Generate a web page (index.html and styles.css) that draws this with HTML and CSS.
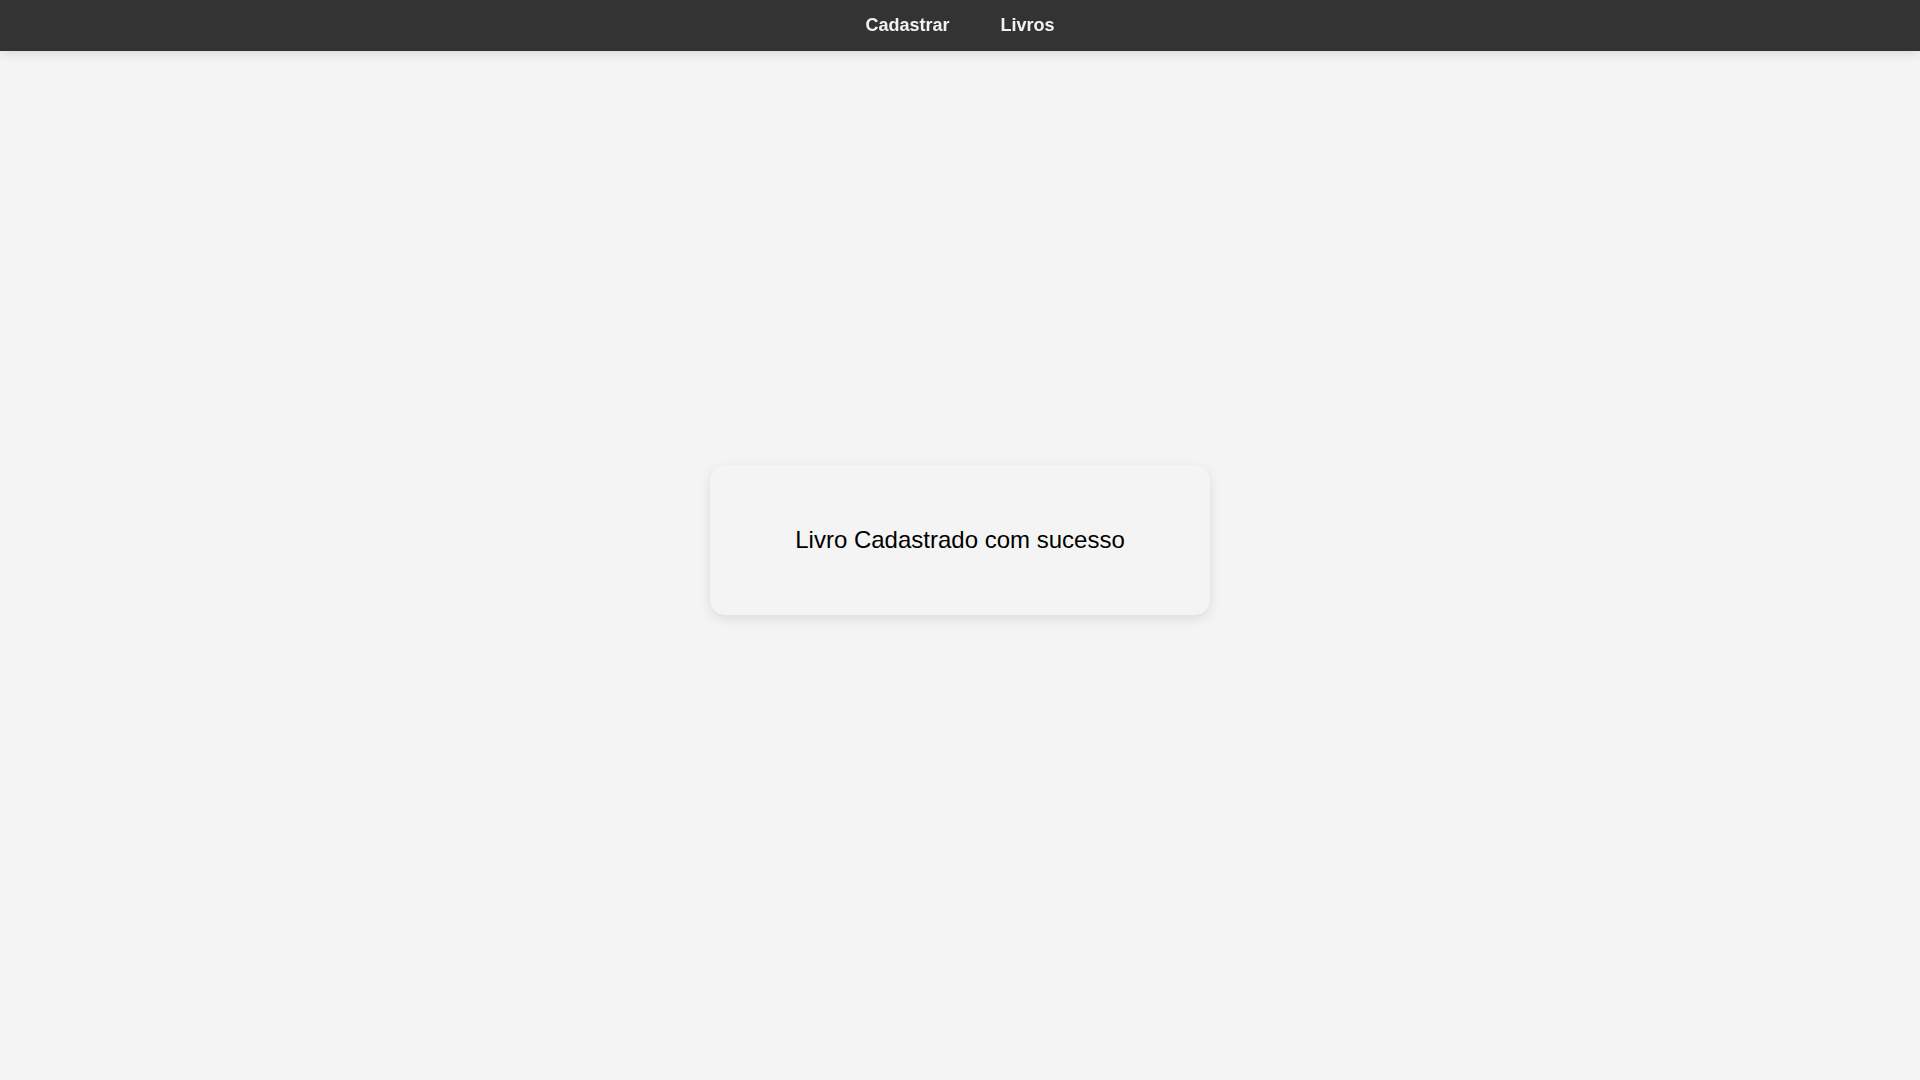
FILE: index.html
```html
<!DOCTYPE html>
<html lang="pt-BR">
<head>
<meta charset="utf-8">
<title>Livro Cadastrado</title>
<link rel="stylesheet" href="styles.css">
</head>
<body>
<nav class="navbar">
  <a class="nav-link" href="#">Cadastrar</a>
  <a class="nav-link" href="#">Livros</a>
</nav>
<main class="content">
  <div class="card">
    <p class="message">Livro Cadastrado com sucesso</p>
  </div>
</main>
</body>
</html>
```

FILE: styles.css
```css
* { box-sizing: border-box; }
html, body {
  margin: 0;
  padding: 0;
}
body {
  background: #f4f4f4;
  font-family: "Liberation Sans", Arial, sans-serif;
  color: #000;
  min-height: 100vh;
}
.navbar {
  position: fixed;
  top: 0;
  left: 0;
  right: 0;
  height: 51px;
  background: #333333;
  display: flex;
  justify-content: center;
  align-items: center;
  gap: 51px;
  box-shadow: 0 2px 10px rgba(0,0,0,0.12);
  z-index: 10;
}
.nav-link {
  color: #f2f2f2;
  text-decoration: none;
  font-weight: bold;
  font-size: 18px;
}
.content {
  min-height: 100vh;
  display: flex;
  justify-content: center;
  align-items: center;
}
.card {
  width: 500px;
  height: 150px;
  background: #f4f4f4;
  border-radius: 15px;
  box-shadow: 0 4px 12px rgba(0,0,0,0.1);
  display: flex;
  justify-content: center;
  align-items: center;
}
.message {
  margin: 0;
  font-size: 24px;
}
```
